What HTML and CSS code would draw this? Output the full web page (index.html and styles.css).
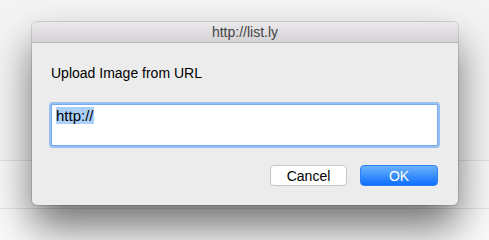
FILE: index.html
```html
<html lang="en">
<head>
  <meta charset="UTF-8">
  <meta name="viewport" content="width=device-width, initial-scale=1.0">
  <title>Upload Image</title>
  <link rel="stylesheet" href="styles.css">
</head>

<body>
  <div class="dialog">
    <div class="titlebar">http://list.ly</div>
    <div class="content">
      <div class="label">Upload Image from URL</div>
      <div class="field"><span class="selected">http://</span></div>
      <div class="buttons">
        <button class="btn">Cancel</button>
        <button class="btn btn-ok">OK</button>
      </div>
    </div>
  </div>
</body>
</html>
```

FILE: styles.css
```css
body {
  margin: 0;
  padding: 22px 0 0 32px;
  height: 240px;
  box-sizing: border-box;
  overflow: hidden;
  font-family: "Liberation Sans", Arial, sans-serif;
  background: linear-gradient(to bottom,
    #f4f4f4 0, #f4f4f4 160px,
    #e2e2e2 160px, #e2e2e2 161px,
    #f8f8f8 161px, #f8f8f8 208px,
    #e2e2e2 208px, #e2e2e2 209px,
    #fafafa 209px);
}

.dialog {
  width: 426px;
  background-color: #ececec;
  border-radius: 5px;
  box-shadow: 0 22px 40px rgba(0, 0, 0, 0.55), 0 0 0 1px rgba(0, 0, 0, 0.13);
  overflow: hidden;
}

.titlebar {
  height: 20px;
  line-height: 21px;
  text-align: center;
  font-size: 14px;
  color: #444;
  background: linear-gradient(to bottom, #ebe9eb, #d4d2d4);
  border-bottom: 1px solid #b6b6b6;
}

.content {
  padding: 22px 20px 19px 19px;
}

.label {
  font-size: 14px;
  line-height: 16px;
  color: #000;
}

.field {
  margin-top: 23px;
  padding: 2px 4px 0;
  box-sizing: border-box;
  height: 42px;
  background-color: #fff;
  border: 1px solid #79abea;
  box-shadow: 0 0 0 2px #94c0f2;
  border-radius: 2px;
  font-size: 15px;
  line-height: 18px;
  color: #000;
}

.selected {
  background-color: #aacff8;
}

.buttons {
  margin-top: 19px;
  display: flex;
  justify-content: flex-end;
  gap: 13px;
}

.btn {
  width: 77px;
  height: 21px;
  padding: 0;
  font-family: inherit;
  font-size: 14px;
  color: #000;
  background-color: #fff;
  border: 1px solid #c6c6c6;
  border-radius: 4px;
}

.btn-ok {
  width: 78px;
  color: #fff;
  border: 1px solid #2e7ff5;
  background: linear-gradient(to bottom, #6bb2fb, #0f6ffd);
}
```
